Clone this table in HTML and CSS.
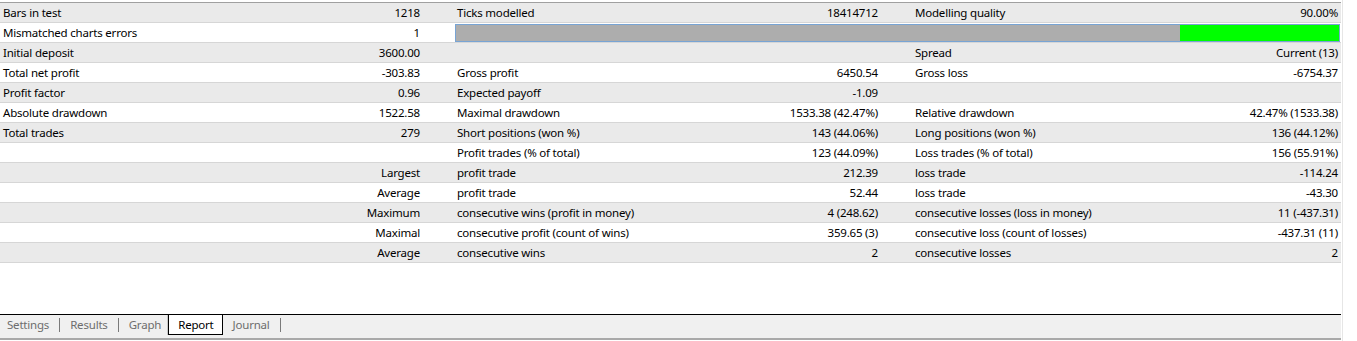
FILE: index.html
```html
<!DOCTYPE html>
<html>
<head>
<meta charset="utf-8">
<link rel="stylesheet" href="styles.css">
</head>
<body>
<div class="window">
  <div class="main">
    <div class="report">
      <div class="row alt">
        <div class="lbl">Bars in test</div><div class="val">1218</div><div class="gap"></div>
        <div class="lbl">Ticks modelled</div><div class="val">18414712</div><div class="gap"></div>
        <div class="lbl">Modelling quality</div><div class="val">90.00%</div>
      </div>
      <div class="row">
        <div class="lbl">Mismatched charts errors</div><div class="val">1</div><div class="gap"></div>
        <div class="quality"><div class="q-rest"></div><div class="q-good"></div></div>
      </div>
      <div class="row alt">
        <div class="lbl">Initial deposit</div><div class="val">3600.00</div><div class="gap"></div>
        <div class="lbl"></div><div class="val"></div><div class="gap"></div>
        <div class="lbl">Spread</div><div class="val">Current (13)</div>
      </div>
      <div class="row">
        <div class="lbl">Total net profit</div><div class="val">-303.83</div><div class="gap"></div>
        <div class="lbl">Gross profit</div><div class="val">6450.54</div><div class="gap"></div>
        <div class="lbl">Gross loss</div><div class="val">-6754.37</div>
      </div>
      <div class="row alt">
        <div class="lbl">Profit factor</div><div class="val">0.96</div><div class="gap"></div>
        <div class="lbl">Expected payoff</div><div class="val">-1.09</div><div class="gap"></div>
        <div class="lbl"></div><div class="val"></div>
      </div>
      <div class="row">
        <div class="lbl">Absolute drawdown</div><div class="val">1522.58</div><div class="gap"></div>
        <div class="lbl">Maximal drawdown</div><div class="val">1533.38 (42.47%)</div><div class="gap"></div>
        <div class="lbl">Relative drawdown</div><div class="val">42.47% (1533.38)</div>
      </div>
      <div class="row alt">
        <div class="lbl">Total trades</div><div class="val">279</div><div class="gap"></div>
        <div class="lbl">Short positions (won %)</div><div class="val">143 (44.06%)</div><div class="gap"></div>
        <div class="lbl">Long positions (won %)</div><div class="val">136 (44.12%)</div>
      </div>
      <div class="row">
        <div class="lbl"></div><div class="val"></div><div class="gap"></div>
        <div class="lbl">Profit trades (% of total)</div><div class="val">123 (44.09%)</div><div class="gap"></div>
        <div class="lbl">Loss trades (% of total)</div><div class="val">156 (55.91%)</div>
      </div>
      <div class="row alt">
        <div class="lbl"></div><div class="val">Largest</div><div class="gap"></div>
        <div class="lbl">profit trade</div><div class="val">212.39</div><div class="gap"></div>
        <div class="lbl">loss trade</div><div class="val">-114.24</div>
      </div>
      <div class="row">
        <div class="lbl"></div><div class="val">Average</div><div class="gap"></div>
        <div class="lbl">profit trade</div><div class="val">52.44</div><div class="gap"></div>
        <div class="lbl">loss trade</div><div class="val">-43.30</div>
      </div>
      <div class="row alt">
        <div class="lbl"></div><div class="val">Maximum</div><div class="gap"></div>
        <div class="lbl">consecutive wins (profit in money)</div><div class="val">4 (248.62)</div><div class="gap"></div>
        <div class="lbl">consecutive losses (loss in money)</div><div class="val">11 (-437.31)</div>
      </div>
      <div class="row">
        <div class="lbl"></div><div class="val">Maximal</div><div class="gap"></div>
        <div class="lbl">consecutive profit (count of wins)</div><div class="val">359.65 (3)</div><div class="gap"></div>
        <div class="lbl">consecutive loss (count of losses)</div><div class="val">-437.31 (11)</div>
      </div>
      <div class="row alt">
        <div class="lbl"></div><div class="val">Average</div><div class="gap"></div>
        <div class="lbl">consecutive wins</div><div class="val">2</div><div class="gap"></div>
        <div class="lbl">consecutive losses</div><div class="val">2</div>
      </div>
    </div>
    <div class="spacer"></div>
    <div class="tabs">
      <span class="tab first">Settings</span><span class="sep"></span>
      <span class="tab">Results</span><span class="sep"></span>
      <span class="tab graph">Graph</span>
      <span class="tab active">Report</span>
      <span class="tab">Journal</span><span class="sep"></span>
    </div>
  </div>
  <div class="side"></div>
</div>
</body>
</html>
```

FILE: styles.css
```css
html, body {
  margin: 0;
  padding: 0;
  background: #ffffff;
}
body {
  font-family: "Noto Sans", "Open Sans", sans-serif;
  font-size: 11.5px;
  letter-spacing: -0.2px;
  color: #000000;
}
.window {
  display: flex;
  width: 1357px;
  height: 341px;
}
.main {
  width: 1341px;
  display: flex;
  flex-direction: column;
  padding-top: 2px;
  box-sizing: border-box;
}
.side {
  flex: 1;
  border-left: 1px solid #e6e6e6;
  margin-left: 1px;
}
.report {
  border-top: 1px solid #a0a0a0;
}
.row {
  display: grid;
  grid-template-columns: 210px 213px 31px 206px 221px 31px 208px 221px;
  height: 19px;
  line-height: 19px;
  border-bottom: 1px solid #d6d6d6;
  background: #ffffff;
  white-space: nowrap;
}
.row.alt {
  background: #eaeaea;
}
.lbl {
  padding-left: 3px;
  overflow: hidden;
}
.val {
  padding-right: 3px;
  text-align: right;
  overflow: hidden;
}
.quality {
  grid-column: 4 / 9;
  margin: 1px 1px 0 1px;
  height: 18px;
  box-sizing: border-box;
  border: 1px solid #78a4d4;
  display: flex;
}
.q-rest {
  flex: 1;
  background: #adadad;
}
.q-good {
  width: 159px;
  background: #00ff00;
}
.spacer {
  flex: 1;
}
.tabs {
  display: flex;
  align-items: stretch;
  height: 23px;
  border-top: 1px solid #000000;
  border-bottom: 2px solid #a9a9a9;
  margin-bottom: 1px;
  background: #f0f0f0;
  color: #6d6d6d;
  line-height: 19px;
}
.tab {
  padding: 0 10px;
  display: flex;
  align-items: flex-start;
}
.tab.first {
  padding-left: 7px;
}
.tab.graph {
  padding-right: 7px;
}
.tab.active {
  background: #ffffff;
  color: #000000;
  border: 1px solid #000000;
  border-top: none;
  height: 19px;
  padding: 0 8px 0 9px;
  box-shadow: -1px 0 0 #c8c8c8;
}
.sep {
  width: 1px;
  background: #7a7a7a;
  height: 14px;
  margin-top: 3px;
}
```
